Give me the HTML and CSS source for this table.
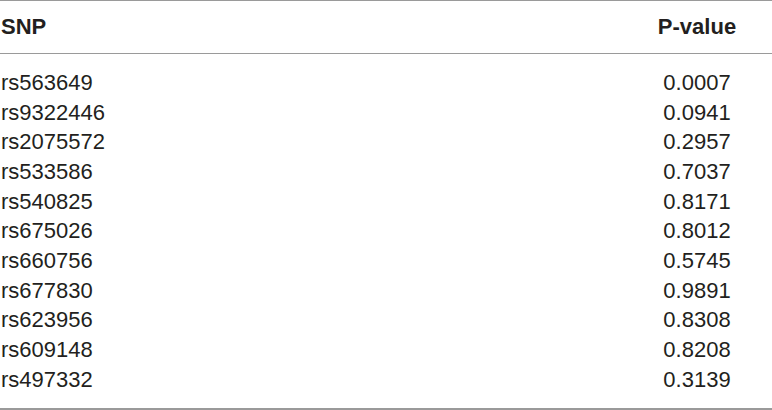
FILE: index.html
```html
<!DOCTYPE html>
<html>
<head>
<meta charset="utf-8">
<link rel="stylesheet" href="styles.css">
</head>
<body>
<div class="table">
  <div class="head">
    <div class="cell snp">SNP</div>
    <div class="cell pv">P-value</div>
  </div>
  <div class="body">
    <div class="row"><div class="cell snp">rs563649</div><div class="cell pv">0.0007</div></div>
    <div class="row"><div class="cell snp">rs9322446</div><div class="cell pv">0.0941</div></div>
    <div class="row"><div class="cell snp">rs2075572</div><div class="cell pv">0.2957</div></div>
    <div class="row"><div class="cell snp">rs533586</div><div class="cell pv">0.7037</div></div>
    <div class="row"><div class="cell snp">rs540825</div><div class="cell pv">0.8171</div></div>
    <div class="row"><div class="cell snp">rs675026</div><div class="cell pv">0.8012</div></div>
    <div class="row"><div class="cell snp">rs660756</div><div class="cell pv">0.5745</div></div>
    <div class="row"><div class="cell snp">rs677830</div><div class="cell pv">0.9891</div></div>
    <div class="row"><div class="cell snp">rs623956</div><div class="cell pv">0.8308</div></div>
    <div class="row"><div class="cell snp">rs609148</div><div class="cell pv">0.8208</div></div>
    <div class="row"><div class="cell snp">rs497332</div><div class="cell pv">0.3139</div></div>
  </div>
</div>
</body>
</html>
```
FILE: styles.css
```css
html, body {
  margin: 0;
  padding: 0;
  background: #fff;
}
.table {
  width: 772px;
  font-family: "Liberation Sans", Arial, sans-serif;
  font-size: 22px;
  color: #231f20;
  border-top: 1px solid #9a9a9a;
  border-bottom: 2px solid #9a9a9a;
}
.head {
  display: flex;
  align-items: center;
  height: 52px;
  font-weight: bold;
  border-bottom: 1px solid #9a9a9a;
}
.body {
  padding: 14px 0 13px;
}
.row {
  display: flex;
  height: 29.7px;
  align-items: center;
}
.cell.snp {
  flex: 1;
  padding-left: 1px;
}
.cell.pv {
  width: 150px;
  text-align: center;
}
```
